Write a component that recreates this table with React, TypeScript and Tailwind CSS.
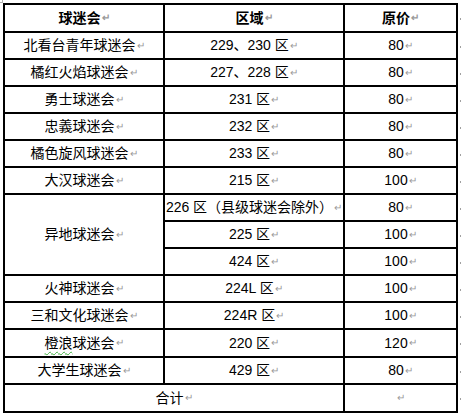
import React from 'react';

const cell = 'flex items-center justify-center whitespace-nowrap border-r-2 border-b-2 border-black';

function Mark() {
  return <span className="ml-[1px] text-[10px] leading-none text-[#9a9a9a]">↵</span>;
}

type Row = { club: string; area: string; price: string; wavy?: boolean; h?: string };

const rows: Row[] = [
  { club: '北看台青年球迷会', area: '229、230 区', price: '80' },
  { club: '橘红火焰球迷会', area: '227、228 区', price: '80' },
  { club: '勇士球迷会', area: '231 区', price: '80' },
  { club: '忠義球迷会', area: '232 区', price: '80' },
  { club: '橘色旋风球迷会', area: '233 区', price: '80' },
  { club: '大汉球迷会', area: '215 区', price: '100' },
];

const away = [
  { area: '226 区（县级球迷会除外）', price: '80' },
  { area: '225 区', price: '100' },
  { area: '424 区', price: '100' },
];

const tail: Row[] = [
  { club: '火神球迷会', area: '224L 区', price: '100' },
  { club: '三和文化球迷会', area: '224R 区', price: '100' },
  { club: '橙浪球迷会', area: '220 区', price: '120', wavy: true, h: 'h-[28px]' },
  { club: '大学生球迷会', area: '429 区', price: '80' },
];

// heights of every row, used for the end-of-row marks on the right
const heights = [
  'h-[28px]',
  ...rows.map(() => 'h-[27px]'),
  ...away.map(() => 'h-[27px]'),
  ...tail.map(r => r.h ?? 'h-[27px]'),
  'h-[28px]',
];

export default function App() {
  return (
    <div
      className="relative w-[461px] h-[413px] bg-white overflow-hidden text-[14px] text-black"
      style={{ fontFamily: '"Liberation Sans", "Noto Sans CJK SC", sans-serif' }}
    >
      {/* table move handle corner */}
      <div className="absolute left-0 top-0 w-[3px] h-[3px] border-r border-b border-[#b0b0b0]" />

      <div className="flex pt-[3px] pl-[3px]">
        <div className="grid grid-cols-[160px_180px_113px] border-l-2 border-t-2 border-black">
          {/* header */}
          <div className={`${cell} h-[28px] font-bold`}>球迷会<Mark /></div>
          <div className={`${cell} h-[28px] font-bold`}>区域<Mark /></div>
          <div className={`${cell} h-[28px] font-bold`}>原价<Mark /></div>

          {rows.map(r => (
            <React.Fragment key={r.club}>
              <div className={`${cell} h-[27px]`}>{r.club}<Mark /></div>
              <div className={`${cell} h-[27px]`}>{r.area}<Mark /></div>
              <div className={`${cell} h-[27px]`}>{r.price}<Mark /></div>
            </React.Fragment>
          ))}

          <div className={`${cell} row-span-3`}>异地球迷会<Mark /></div>
          {away.map(a => (
            <React.Fragment key={a.area}>
              <div className={`${cell} h-[27px]`}>{a.area}<Mark /></div>
              <div className={`${cell} h-[27px]`}>{a.price}<Mark /></div>
            </React.Fragment>
          ))}

          {tail.map(r => (
            <React.Fragment key={r.club}>
              <div className={`${cell} ${r.h ?? 'h-[27px]'}`}>
                {r.wavy ? (
                  <>
                    <span className="underline decoration-wavy decoration-[#3fae3f] decoration-1 underline-offset-[3px]">橙浪</span>
                    球迷会
                  </>
                ) : (
                  r.club
                )}
                <Mark />
              </div>
              <div className={`${cell} ${r.h ?? 'h-[27px]'}`}>{r.area}<Mark /></div>
              <div className={`${cell} ${r.h ?? 'h-[27px]'}`}>{r.price}<Mark /></div>
            </React.Fragment>
          ))}

          <div className={`${cell} col-span-2 h-[28px]`}>合计<Mark /></div>
          <div className={`${cell} h-[28px]`}><Mark /></div>
        </div>

        {/* end-of-row marks */}
        <div className="flex flex-col pt-[2px]">
          {heights.map((h, i) => (
            <div key={i} className={`${h} flex items-center pl-[2px]`}>
              <div className="w-[2px] h-[2px] bg-[#a0a0a0]" />
            </div>
          ))}
        </div>
      </div>
    </div>
  );
}
